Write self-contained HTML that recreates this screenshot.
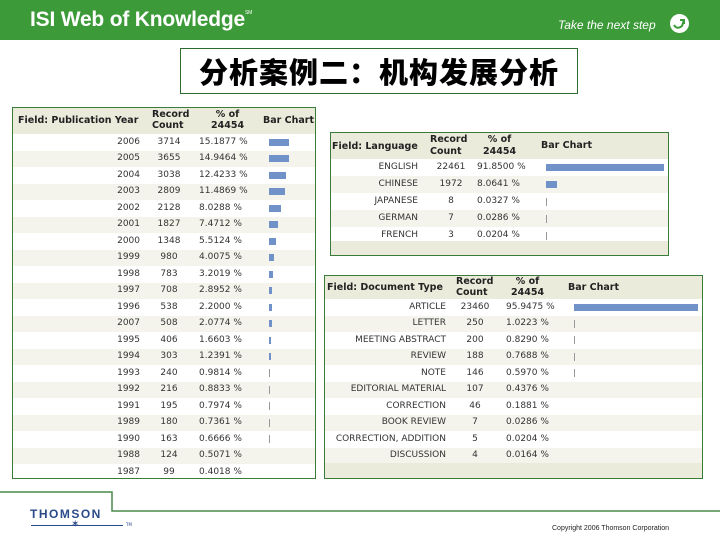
<!DOCTYPE html>
<html><head><meta charset="utf-8"><style>
*{margin:0;padding:0;box-sizing:border-box}
body{width:720px;height:540px;position:relative;background:#fff;overflow:hidden;font-family:"DejaVu Sans","Liberation Sans",sans-serif;}
.hdr{position:absolute;left:0;top:0;width:720px;height:40px;background:#3c9a38}
.logo{position:absolute;left:30px;top:8px;color:#fff;font:bold 21px "Liberation Sans",sans-serif;letter-spacing:-0.2px}
.logo sup{font-size:5px;vertical-align:top;position:relative;top:2px;font-weight:normal}
.tag{position:absolute;left:558px;top:18px;color:#fff;font:italic 12px "Liberation Sans",sans-serif}
.circ{position:absolute;left:670px;top:14px;width:19px;height:19px;border-radius:50%;background:#fff}
.title{position:absolute;left:180px;top:48px;width:398px;height:46px;border:1px solid #2e6b2e;text-align:center;font:900 29px "Noto Sans CJK SC",sans-serif;line-height:44px;color:#000;letter-spacing:1px}
.tbl{position:absolute;border:1px solid #3a7a3a;background:#fff;overflow:hidden;font-size:9px;color:#333}
.th{position:absolute;left:0;top:0;right:0;background:#ebebdb;font-weight:bold;color:#222;font-size:9.5px}
.r{position:absolute;left:0;right:0}
.r.a{background:#f5f4ec}
.c{position:absolute;white-space:nowrap}
.bar{position:absolute;background:#7191c9}
.ft{position:absolute;left:0;right:0;bottom:0;background:#ebebdb}
</style></head><body>
<div class="hdr"></div>
<div class="logo">ISI Web of Knowledge<sup>SM</sup></div>
<div class="tag">Take the next step</div>
<div class="circ"><svg width="19" height="19" viewBox="0 0 19 19"><path d="M4 11 Q7 16 12 12 L14 6 M10 6 L14 6 L14 10" stroke="#3c9a38" stroke-width="2" fill="none"/></svg></div>
<div class="title">分析案例二：机构发展分析</div>

<div class="tbl" style="left:12px;top:107px;width:304px;height:372px">
<div class="th" style="height:26px">
<div class="c" style="left:5px;top:7px">Field: Publication Year</div>
<div class="c" style="left:139px;top:1px;line-height:11px">Record<br>Count</div>
<div class="c" style="left:198px;top:1px;line-height:11px;text-align:center">% of<br>24454</div>
<div class="c" style="left:250px;top:7px">Bar Chart</div>
</div>
<div id="L"></div>
</div>

<div class="tbl" style="left:330px;top:132px;width:339px;height:124px">
<div class="th" style="height:26px">
<div class="c" style="left:1px;top:8px">Field: Language</div>
<div class="c" style="left:99px;top:1px;line-height:12px">Record<br>Count</div>
<div class="c" style="left:152px;top:1px;line-height:12px;text-align:center">% of<br>24454</div>
<div class="c" style="left:210px;top:7px">Bar Chart</div>
</div>
<div id="G"></div>
<div class="ft" style="height:14px"></div>
</div>

<div class="tbl" style="left:324px;top:275px;width:379px;height:204px">
<div class="th" style="height:23px">
<div class="c" style="left:2px;top:6px">Field: Document Type</div>
<div class="c" style="left:131px;top:0px;line-height:11px">Record<br>Count</div>
<div class="c" style="left:186px;top:0px;line-height:11px;text-align:center">% of<br>24454</div>
<div class="c" style="left:243px;top:6px">Bar Chart</div>
</div>
<div id="D"></div>
<div class="ft" style="height:15px"></div>
</div>

<svg style="position:absolute;left:0;top:480px" width="720" height="40"><path d="M0 12 H112 V31 H720" stroke="#4a8a4a" stroke-width="1.5" fill="none"/></svg>
<div style="position:absolute;left:30px;top:507px;font:bold 12px 'Liberation Sans',sans-serif;color:#2a4a8a;letter-spacing:1.5px">THOMSON</div>
<div style="position:absolute;left:31px;top:525px;width:92px;height:1px;background:#2a4a8a"></div>
<div style="position:absolute;left:71px;top:519px;color:#2a4a8a;font-size:10px">✶</div>
<div style="position:absolute;left:126px;top:522px;color:#2a4a8a;font-size:4px">TM</div>
<div style="position:absolute;left:552px;top:525px;font:7px 'Liberation Sans',sans-serif;color:#222">Copyright 2006 Thomson Corporation</div>

<script>
function rows(id,data,o){
 let h='';
 data.forEach((d,i)=>{
  let t=o.top+i*o.rh;
  h+=`<div class="r${i%2?' a':''}" style="top:${t}px;height:${o.rh}px">
  <div class="c" style="right:${o.W-o.lab}px;top:${(o.rh-11)/2}px">${d[0]}</div>
  <div class="c" style="left:${o.cnt-20}px;width:40px;text-align:center;top:${(o.rh-11)/2}px">${d[1]}</div>
  <div class="c" style="left:${o.pct}px;top:${(o.rh-11)/2}px">${d[2]} %</div>
  ${d[3]?`<div class="bar" style="left:${o.bar}px;width:${d[3]}px;top:${(o.rh-(d[3]>1?7:8))/2}px;height:${d[3]>1?7:8}px;${d[3]==1?'background:#999':''}"></div>`:''}
  </div>`;
 });
 document.getElementById(id).innerHTML=h;
}
rows('L',[["2006","3714","15.1877",20],["2005","3655","14.9464",20],["2004","3038","12.4233",17],["2003","2809","11.4869",16],["2002","2128","8.0288",12],["2001","1827","7.4712",9],["2000","1348","5.5124",7],["1999","980","4.0075",5],["1998","783","3.2019",4],["1997","708","2.8952",3],["1996","538","2.2000",3],["2007","508","2.0774",3],["1995","406","1.6603",2],["1994","303","1.2391",2],["1993","240","0.9814",1],["1992","216","0.8833",1],["1991","195","0.7974",1],["1989","180","0.7361",1],["1990","163","0.6666",1],["1988","124","0.5071",0],["1987","99","0.4018",0]],
 {top:26,rh:16.5,W:302,lab:127,cnt:156,pct:186,bar:256});
rows('G',[["ENGLISH","22461","91.8500",118],["CHINESE","1972","8.0641",11],["JAPANESE","8","0.0327",1],["GERMAN","7","0.0286",1],["FRENCH","3","0.0204",1]],
 {top:26,rh:17,W:337,lab:87,cnt:120,pct:146,bar:215});
rows('D',[["ARTICLE","23460","95.9475",124],["LETTER","250","1.0223",1],["MEETING ABSTRACT","200","0.8290",1],["REVIEW","188","0.7688",1],["NOTE","146","0.5970",1],["EDITORIAL MATERIAL","107","0.4376",0],["CORRECTION","46","0.1881",0],["BOOK REVIEW","7","0.0286",0],["CORRECTION, ADDITION","5","0.0204",0],["DISCUSSION","4","0.0164",0]],
 {top:23,rh:16.5,W:377,lab:121,cnt:150,pct:181,bar:249});
</script>
</body></html>
